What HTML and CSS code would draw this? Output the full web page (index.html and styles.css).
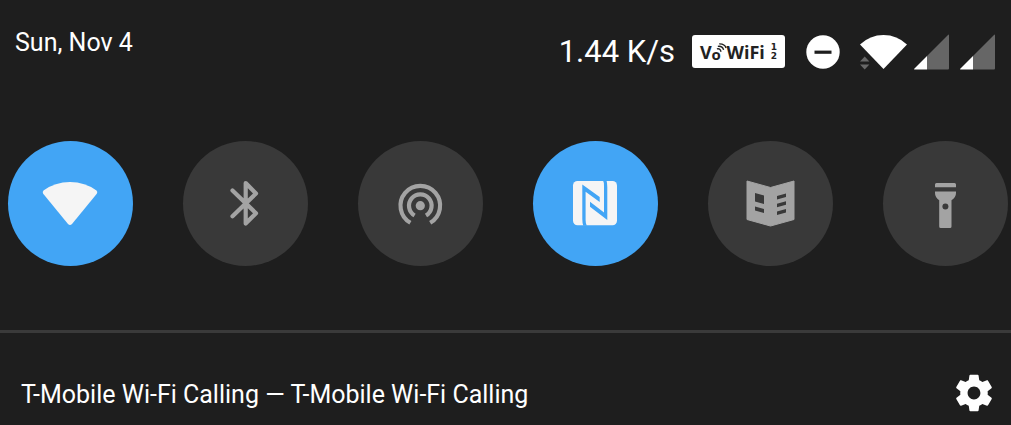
FILE: index.html
```html
<!DOCTYPE html>
<html lang="en">
<head>
    <meta charset="UTF-8">
    <meta name="viewport" content="width=device-width, initial-scale=1.0">
    <title>Quick Settings</title>
    <link rel="stylesheet" href="styles.css">
</head>
<body>
    <header class="header">
        <div class="date">Sun, Nov 4</div>
        <div class="status">
            <span class="speed">1.44 K/s</span>
            <span class="badge">
                <span>V</span>
                <span class="badge-o">o
                    <svg class="badge-waves" viewBox="0 0 12 12">
                        <path d="M1 6.500Q4.500 5.500 5.500 9.500M2 3.700Q7 3 8.300 7.500M3.500 1Q9.500 .8 11 5.500"/>
                    </svg>
                </span>
                <span>WiFi</span>
                <span class="sim"><span>1</span><span>2</span></span>
            </span>
            <svg class="dnd" viewBox="0 0 34 34">
                <circle cx="17" cy="17" r="16.700" fill="#fff"/>
                <path d="M8.500 17.200h17" stroke="#1e1e1e" stroke-width="3.200"/>
            </svg>
            <svg class="wifi" viewBox="0 0 47 36">
                <path d="M0 10.500Q10 1 23.500 1T47 10.500L23.500 35z" fill="#fff"/>
                <path d="M0 27.500L4.700 22.500L9.400 27.500zM0 30.500h9.400L4.700 35.500z" fill="#686868"/>
            </svg>
            <svg class="signal" viewBox="0 0 35 36">
                <path d="M35 1.500Q35 0 34 1L13 22v13.500h21q1 0 1-1z" fill="#666"/>
                <path d="M13 22L.5 34.500q-1 1 .5 1H13z" fill="#fff"/>
            </svg>
            <svg class="signal" viewBox="0 0 35 36">
                <path d="M35 1.500Q35 0 34 1L13 22v13.500h21q1 0 1-1z" fill="#666"/>
                <path d="M13 22L.5 34.500q-1 1 .5 1H13z" fill="#fff"/>
            </svg>
        </div>
    </header>

    <main class="tiles">
        <button type="button" class="tile on" aria-label="Wi-Fi">
            <svg viewBox="0 0 125 125">
                <path d="M35.500 49.500Q47 41 62 41T88.500 49.500Q90 51 88.800 52.800L64 83Q62 85.200 60 83L35.200 52.800Q34 51 35.500 49.500z" fill="currentColor"/>
            </svg>
        </button>
        <button type="button" class="tile" aria-label="Bluetooth">
            <svg viewBox="0 0 125 125">
                <path d="M49.500 49.500L73 72.300L62.700 82.500V42L73 52.500L49.500 75.300" fill="none" stroke="currentColor" stroke-width="4.200" stroke-linecap="round" stroke-linejoin="round"/>
            </svg>
        </button>
        <button type="button" class="tile" aria-label="Hotspot">
            <svg viewBox="0 0 125 125">
                <circle cx="62.300" cy="64.700" r="4.600" fill="currentColor"/>
                <path d="M52.400 81.800A19.800 19.800 0 1 1 72.200 81.800M56.600 74.500A11.300 11.300 0 1 1 68 74.500" fill="none" stroke="currentColor" stroke-width="4.200"/>
            </svg>
        </button>
        <button type="button" class="tile on" aria-label="NFC">
            <svg viewBox="0 0 125 125">
                <rect x="40" y="40" width="44" height="44.300" rx="4.500" fill="currentColor"/>
                <path class="cut" d="M70 39.500H73.500Q74.300 42 74.300 46V79L57 65.700V60.800L71 71.500V45Q71 41 70 39.500zM53.800 84.800H50.300Q49.300 82 49.300 78V43.500L66.700 56V61L52.600 50.800V79Q52.600 83 53.800 84.800z"/>
            </svg>
        </button>
        <button type="button" class="tile" aria-label="Reading mode">
            <svg viewBox="0 0 125 125">
                <path d="M39 40L62.500 46.500L86 40V78.500L62.500 85L39 78.500z" fill="currentColor" stroke="currentColor" stroke-linejoin="round"/>
                <path class="cut" d="M47 52l9 2.500v8.500l-9-2.500zM47 65.500l9 2.500v4l-9-2.500zM69 55l9-2.500v3.500l-9 2.500zM69 62.700l9-2.500v3.500l-9 2.500zM69 70.400l9-2.500v3.500l-9 2.500z"/>
            </svg>
        </button>
        <button type="button" class="tile" aria-label="Flashlight">
            <svg viewBox="0 0 125 125">
                <path d="M52 46.200V43.500Q52 42 53.500 42h18Q73 42 73 43.500V46.200zM52 50.500H73V52Q73 56.500 68.500 59.200V85.500Q68.500 87 67 87H57.700Q56.200 87 56.200 85.500V59.200Q52 56.500 52 52z" fill="currentColor"/>
                <circle class="cut" cx="62.400" cy="65.500" r="3"/>
            </svg>
        </button>
    </main>

    <footer class="footer">
        <span class="carrier">T-Mobile Wi-Fi Calling — T-Mobile Wi-Fi Calling</span>
        <button type="button" class="settings" aria-label="Settings">
            <svg viewBox="0 0 24 24">
                <path fill="currentColor" d="M19.430 12.980c.04-.32.070-.64.070-.98s-.03-.66-.07-.98l2.110-1.650c.19-.15.240-.42.120-.64l-2-3.460c-.12-.22-.39-.3-.61-.22l-2.490 1c-.52-.4-1.080-.73-1.690-.98l-.38-2.650C14.460 2.180 14.250 2 14 2h-4c-.25 0-.46.180-.49.420l-.38 2.650c-.61.250-1.170.590-1.690.980l-2.490-1c-.23-.09-.49 0-.61.220l-2 3.460c-.13.220-.07.490.120.640l2.110 1.650c-.04.320-.07.650-.07.980s.03.660.070.980l-2.110 1.650c-.19.150-.24.420-.12.640l2 3.460c.12.220.390.300.610.220l2.490-1c.52.400 1.080.730 1.690.980l.38 2.650c.03.240.240.420.490.420h4c.25 0 .46-.18.490-.42l.38-2.650c.61-.25 1.170-.59 1.690-.98l2.490 1c.23.090.490 0 .610-.22l2-3.460c.12-.22.070-.49-.12-.64l-2.110-1.650zM12 15.500c-1.930 0-3.500-1.570-3.500-3.500s1.570-3.500 3.500-3.500 3.500 1.570 3.500 3.500-1.570 3.500-3.500 3.500z"/>
            </svg>
        </button>
    </footer>
</body>
</html>
```
FILE: styles.css
```css
* {
    box-sizing: border-box;
}

body {
    margin: 0;
    background-color: #1e1e1e;
    color: #fff;
    font-family: Roboto, sans-serif;
    font-size: 25px;
}

svg {
    display: block;
}

button {
    padding: 0;
    border: none;
    cursor: pointer;
}

.header {
    display: flex;
    justify-content: space-between;
    align-items: flex-start;
    padding: 28px 16px 0 15px;
}

.date {
    line-height: 30px;
}

.status {
    display: flex;
    align-items: center;
    padding-top: 5px;
    height: 42px;
}

.speed {
    font-size: 31px;
    margin-right: 17px;
}

.badge {
    display: flex;
    align-items: center;
    justify-content: center;
    width: 93px;
    height: 33px;
    margin-right: 21px;
    border-radius: 3px;
    background-color: #fff;
    color: #222;
    font-family: "Open Sans", sans-serif;
    font-size: 18px;
    font-weight: bold;
    line-height: 20px;
}

.badge-o {
    position: relative;
    width: 15px;
    padding-top: 4px;
    font-size: 15px;
}

.badge-waves {
    position: absolute;
    top: 3px;
    right: 0;
    width: 11px;
    height: 11px;
    fill: none;
    stroke: #222;
    stroke-width: 1.500;
}

.sim {
    display: flex;
    flex-direction: column;
    margin-left: 6px;
    font-family: "DejaVu Sans", sans-serif;
    font-size: 9px;
    font-weight: bold;
    line-height: 9px;
}

.dnd {
    width: 34px;
    height: 34px;
    margin-right: 20px;
}

.wifi {
    width: 47px;
    height: 36px;
    margin-right: 7px;
}

.signal {
    width: 35px;
    height: 36px;
}

.signal + .signal {
    margin-left: 11px;
}

.tiles {
    display: flex;
    justify-content: space-between;
    padding: 71px 3px 64px 8px;
    border-bottom: 3px solid #3a3a3a;
}

.tile {
    width: 125px;
    height: 125px;
    border-radius: 50%;
    background-color: #393939;
    color: #a3a3a3;
}

.tile.on {
    background-color: #42a5f5;
    color: #f5f5f5;
}

.cut {
    fill: #393939;
}

.on .cut {
    fill: #42a5f5;
}

.footer {
    display: flex;
    justify-content: space-between;
    align-items: center;
    padding: 38px 15px 0 21px;
}

.carrier {
    padding-top: 2px;
}

.settings {
    background: none;
    color: #fff;
}

.settings svg {
    width: 44px;
    height: 44px;
}
```
